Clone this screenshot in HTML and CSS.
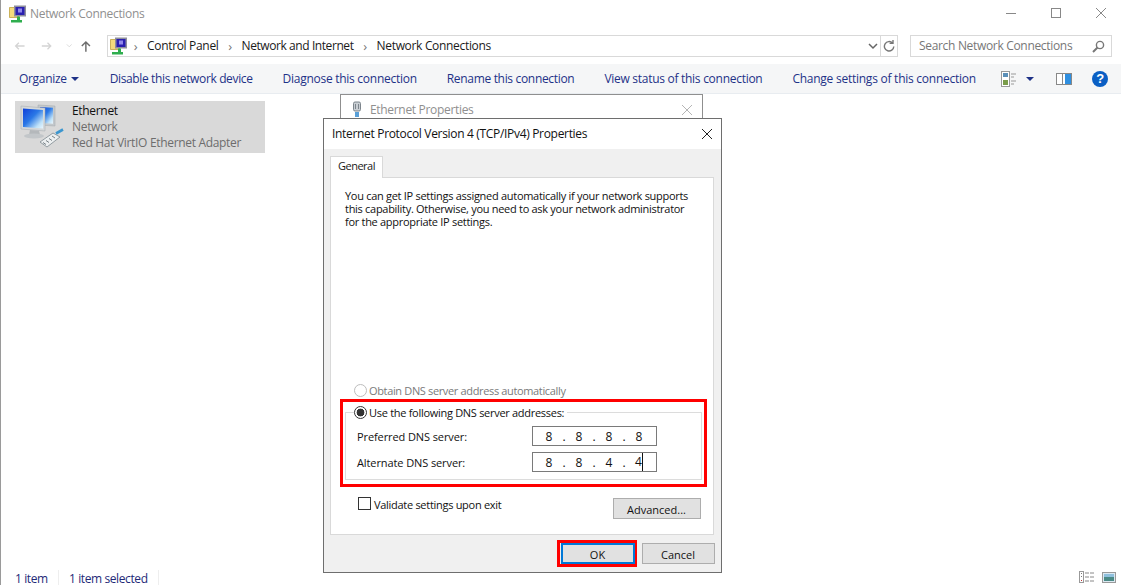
FILE: index.html
```html
<!DOCTYPE html>
<html lang="en">
<head>
<meta charset="utf-8">
<title>Network Connections</title>
<link rel="stylesheet" href="styles.css">
</head>
<body>
<svg class="defs" width="0" height="0" aria-hidden="true">
  <defs>
    <linearGradient id="scr" x1="0" y1="0" x2="1" y2="1">
      <stop offset="0" stop-color="#0f3fd8"/><stop offset=".45" stop-color="#2a78e6"/><stop offset=".8" stop-color="#bfe2f8"/><stop offset="1" stop-color="#eaf6fd"/>
    </linearGradient>
    <symbol id="netfolder" viewBox="0 0 18 18">
      <path d="M.5 2.5h5l1 1h3v9H.5z" fill="#f4db7c" stroke="#b8982f" stroke-width=".7"/>
      <rect x="5" y=".5" width="12" height="11" fill="#8f8f9c"/>
      <rect x="6.5" y="2" width="9" height="8" fill="#2a1fb0"/>
      <rect x="9" y="3.5" width="4" height="4" fill="#9289ea"/>
      <rect x="8" y="11.5" width="3" height="3.5" fill="#2fae4e"/>
      <rect x="2" y="15" width="11" height="2.5" fill="#2fae4e"/>
    </symbol>
  </defs>
</svg>
<div class="explorer">
  <header class="titlebar">
    <svg class="ico18"><use href="#netfolder"/></svg>
    <span class="title-text">Network Connections</span>
    <div class="winctl">
      <svg width="12" height="12" viewBox="0 0 12 12"><path d="M1 6.5h10" stroke="#888" fill="none"/></svg>
      <svg width="12" height="12" viewBox="0 0 12 12"><rect x="1.5" y="1.5" width="9" height="9" stroke="#888" fill="none"/></svg>
      <svg width="12" height="12" viewBox="0 0 12 12"><path d="M1 1l10 10M11 1L1 11" stroke="#888" fill="none"/></svg>
    </div>
  </header>
  <nav class="navbar">
    <div class="navbtns">
      <svg width="14" height="12" viewBox="0 0 14 12"><path d="M13 6H2M6 2L2 6l4 4" stroke="#d4d4d4" stroke-width="1.6" fill="none"/></svg>
      <svg width="14" height="12" viewBox="0 0 14 12"><path d="M1 6h11M8 2l4 4-4 4" stroke="#d4d4d4" stroke-width="1.6" fill="none"/></svg>
      <svg class="nb-down" width="8" height="6" viewBox="0 0 8 6"><path d="M1 1l3 3 3-3" stroke="#d4d4d4" fill="none"/></svg>
      <svg class="nb-up" width="12" height="14" viewBox="0 0 12 14"><path d="M6 14V2M1 7l5-5 5 5" stroke="#6d6d6d" stroke-width="1.8" fill="none"/></svg>
    </div>
    <div class="address">
      <svg class="ico18"><use href="#netfolder"/></svg>
      <span class="crumb-sep">›</span><span class="crumb">Control Panel</span>
      <span class="crumb-sep">›</span><span class="crumb crumb-mid">Network and Internet</span>
      <span class="crumb-sep">›</span><span class="crumb">Network Connections</span>
      <span class="addr-fill"></span>
      <svg class="addr-chev" width="10" height="7" viewBox="0 0 10 7"><path d="M1 1l4 4 4-4" stroke="#666" stroke-width="1.5" fill="none"/></svg>
      <span class="addr-refresh"><svg width="12" height="12" viewBox="0 0 12 12"><path d="M9.5 3A4.7 4.7 0 1 0 10.8 6.5M10 0v3.4H6.6" stroke="#777" stroke-width="1.4" fill="none"/></svg></span>
    </div>
    <div class="search">
      <span class="search-text">Search Network Connections</span>
      <svg width="13" height="13" viewBox="0 0 13 13"><circle cx="8" cy="5" r="3.6" stroke="#777" stroke-width="1.4" fill="none"/><path d="M5.5 7.5L1 12" stroke="#777" stroke-width="2"/></svg>
    </div>
  </nav>
  <div class="toolbar">
    <span class="tool tool-org">Organize<i class="caret"></i></span>
    <span class="tool tool-disable">Disable this network device</span>
    <span class="tool tool-diagnose">Diagnose this connection</span>
    <span class="tool">Rename this connection</span>
    <span class="tool tool-view">View status of this connection</span>
    <span class="tool tool-change">Change settings of this connection</span>
    <div class="tool-icons">
      <svg width="16" height="16" viewBox="0 0 16 16"><rect x=".5" y=".5" width="8" height="15" fill="#fff" stroke="#999"/><rect x="2" y="2" width="5" height="4" fill="#5b8fb8"/><rect x="2" y="9" width="5" height="5" fill="#7a9c4a"/><path d="M10 3h5M10 6h3M10 10h5M10 13h3" stroke="#999"/></svg>
      <i class="caret caret-views"></i>
      <svg class="pane-ico" width="16" height="12" viewBox="0 0 16 12"><rect x=".5" y=".5" width="15" height="11" fill="#fff" stroke="#888"/><rect x="6" y="1" width="1" height="10" fill="#888"/><rect x="9" y="1" width="6" height="10" fill="#2f8fe0"/></svg>
      <svg class="help-ico" width="16" height="16" viewBox="0 0 16 16"><circle cx="8" cy="8" r="8" fill="#0a5fc4"/><text x="8" y="12.2" class="help-q" text-anchor="middle">?</text></svg>
    </div>
  </div>
  <main class="content">
    <div class="adapter">
      <svg class="adapter-ico" width="48" height="48" viewBox="0 0 48 48">
        <path d="M19 1l17 1v20l-17-1z" fill="#c3c8cc" stroke="#a3a9ad" stroke-width=".5"/><path d="M21 3l13 .7v16l-13-.7z" fill="url(#scr)"/>
        <path d="M2 2l24 2v23L2 25z" fill="#d4d8da" stroke="#a3a9ad" stroke-width=".5"/><path d="M4 4.5l20 1.6v18.5L4 23z" fill="url(#scr)"/>
        <path d="M11 26l9 .7 1 4H10z" fill="#b4b8bb"/><ellipse cx="15" cy="32" rx="10" ry="2.4" fill="#c2c6c9"/>
        <path d="M21 38l13-9 7 4-13 10z" fill="#eceff0" stroke="#7f8a90" stroke-width=".8"/><path d="M24 38.500l3 2M27 36.500l3 2M30 34.500l3 2M33 32l3 2" stroke="#5c666c" stroke-width=".8"/>
        <path d="M37 29.500l7-4" stroke="#3b96cf" stroke-width="2.6"/>
      </svg>
      <div class="adapter-text">
        <div class="adapter-name">Ethernet</div>
        <div class="adapter-sub">Network</div>
        <div class="adapter-sub">Red Hat VirtIO Ethernet Adapter</div>
      </div>
    </div>
  </main>
  <footer class="statusbar">
    <span class="status-a">1 item</span>
    <span class="status-b">1 item selected</span>
    <span class="status-c"></span>
    <div class="status-views">
      <svg width="16" height="12" viewBox="0 0 16 12"><rect x=".5" y=".5" width="4" height="11" fill="#fff" stroke="#999"/><rect x="2" y="2" width="1" height="1" fill="#777"/><rect x="2" y="5" width="1" height="1" fill="#777"/><rect x="2" y="9" width="1" height="1" fill="#b33"/><path d="M6 2h4M11 2h4M6 6h4M11 6h4M6 10h4M11 10h4" stroke="#888"/></svg>
      <svg width="14" height="11" viewBox="0 0 14 11"><rect x=".5" y=".5" width="13" height="10" fill="#dce9f2" stroke="#999"/><rect x="2" y="2" width="10" height="3" fill="#8fc0dd"/><rect x="2" y="5" width="10" height="4" fill="#4a8a86"/></svg>
    </div>
  </footer>
</div>

<section class="dlg-back">
  <svg width="10" height="17" viewBox="0 0 10 17"><rect x="1.5" y="1" width="7" height="9" rx="1.5" fill="#c9ced3" stroke="#7d858c"/><path d="M3.5 3v5M6.5 3v5" stroke="#7d858c"/><rect x="3" y="11" width="4" height="5" fill="#5aa0d8"/></svg>
  <span class="back-title">Ethernet Properties</span>
  <svg class="back-x" width="12" height="12" viewBox="0 0 12 12"><path d="M1 1l10 10M11 1L1 11" stroke="#b5b5b5" fill="none"/></svg>
</section>

<section class="dlg">
  <div class="dlg-title">
    <span class="dlg-title-text">Internet Protocol Version 4 (TCP/IPv4) Properties</span>
    <svg width="12" height="12" viewBox="0 0 12 12"><path d="M1 1l10 10M11 1L1 11" stroke="#222" fill="none"/></svg>
  </div>
  <div class="dlg-body">
    <div class="tab">General</div>
    <div class="panel">
      <p class="intro">You can get IP settings assigned automatically if your network supports<br>this capability. Otherwise, you need to ask your network administrator<br>for the appropriate IP settings.</p>
      <div class="spacer"></div>
      <label class="radio-line radio-off"><i class="radio"></i>Obtain DNS server address automatically</label>
      <div class="dns-outline">
        <div class="group">
          <label class="radio-line legend"><i class="radio radio-on"></i>Use the following DNS server addresses:</label>
          <div class="dns-row"><span>Preferred DNS server:</span><div class="ip"><b>8</b><em>.</em><b>8</b><em>.</em><b>8</b><em>.</em><b>8</b></div></div>
          <div class="dns-row"><span>Alternate DNS server:</span><div class="ip"><b>8</b><em>.</em><b>8</b><em>.</em><b>4</b><em>.</em><b class="caretted">4</b></div></div>
        </div>
      </div>
      <div class="validate">
        <label class="check-line"><i class="check"></i>Validate settings upon exit</label>
        <span class="btn btn-adv">Advanced...</span>
      </div>
    </div>
    <div class="dlg-actions">
      <div class="ok-outline"><span class="btn btn-ok">OK</span></div>
      <span class="btn btn-cancel">Cancel</span>
    </div>
  </div>
</section>
</body>
</html>
```

FILE: styles.css
```css
* { box-sizing: border-box; }
html, body { margin: 0; height: 100%; overflow: hidden; }
body { background: #fff; font-family: "Open Sans", "Noto Sans", "Liberation Sans", sans-serif; font-size: 12px; letter-spacing: -0.32px; color: #1a1a1a; position: relative; }
.defs { position: absolute; }
.ico18 { width: 18px; height: 18px; flex: none; }

.explorer { height: 585px; border-left: 1px solid #9a9a9a; display: flex; flex-direction: column; }

.titlebar { height: 28px; display: flex; align-items: center; padding-left: 8px; flex: none; }
.title-text { margin: -2px 0 0 3px; color: #8f8f8f; }
.winctl { margin-left: auto; display: flex; gap: 33px; padding-right: 14px; margin-top: -2px; }

.navbar { height: 36px; display: flex; align-items: center; flex: none; padding: 0 9px 0 0; }
.navbtns { width: 106px; display: flex; align-items: center; padding-left: 13px; }
.navbtns svg { margin-right: 16px; }
.navbtns .nb-down { margin-right: 9px; margin-left: -3px; }
.address { width: 791px; height: 22px; border: 1px solid #d9d9d9; display: flex; align-items: center; padding-left: 2px; }
.address .ico18 { margin-right: -4px; }
.crumb-sep { width: 23px; text-align: center; color: #777; font-size: 13px; line-height: 1; }
.crumb { color: #1a1a1a; white-space: nowrap; margin-top: -2px; }
.crumb-mid { letter-spacing: -0.42px; }
.addr-fill { flex: 1; }
.addr-chev { margin-right: 2px; }
.addr-refresh { width: 17px; height: 20px; border-left: 1px solid #d9d9d9; display: flex; align-items: center; justify-content: center; }
.search { margin-left: 12px; width: 202px; height: 22px; border: 1px solid #d9d9d9; display: flex; align-items: center; justify-content: space-between; padding: 0 6px 0 8px; color: #777; white-space: nowrap; }
.search-text { margin-top: -2px; }

.toolbar { height: 30px; flex: none; background: #f5f6f7; border-bottom: 1px solid #e8ecf0; display: flex; align-items: center; padding: 0 0 0 18px; gap: 30px; color: #1e3287; white-space: nowrap; }
.tool-org { display: inline-flex; align-items: center; margin-right: 1px; }
.tool-disable { letter-spacing: -0.36px; }
.tool-diagnose { letter-spacing: -0.27px; }
.tool-view { letter-spacing: -0.28px; }
.tool-change { letter-spacing: -0.25px; }
.caret { display: inline-block; margin-left: 4px; border: 4px solid transparent; border-top: 4px solid #1e3287; border-bottom: 0; width: 8px; height: 4px; }
.tool-icons { margin-left: -5px; display: flex; align-items: center; }
.caret-views { margin-left: 9px; }
.pane-ico { margin-left: 22px; }
.help-ico { margin-left: 20px; }
.help-q { font-family: "Liberation Sans", sans-serif; font-size: 13px; font-weight: 700; fill: #fff; }

.content { flex: 1; padding: 7px 14px; }
.adapter { width: 250px; height: 52px; background: #d9d9d9; display: flex; align-items: flex-start; padding: 2px 0 0 4px; }
.adapter-ico { flex: none; margin-top: 1px; }
.adapter-text { margin-left: 5px; line-height: 16px; white-space: nowrap; }
.adapter-name { color: #111; }
.adapter-sub { color: #6d6d6d; }

.statusbar { height: 23px; flex: none; display: flex; align-items: center; color: #1e2a78; padding: 9px 0 0 14px; letter-spacing: -0.4px; }
.status-a { width: 44px; border-right: 1px solid #eee; }
.status-b { width: 100px; padding-left: 10px; border-right: 1px solid #eee; white-space: nowrap; }
.status-c { flex: 1; }
.status-views { display: flex; gap: 7px; padding-right: 5px; align-items: center; margin-top: -2px; }

.dlg-back { position: absolute; left: 340px; top: 94px; width: 363px; height: 60px; background: #fff; border: 1px solid #8f8f8f; display: flex; align-items: flex-start; padding: 6px 0 0 11px; color: #8f8f8f; }
.back-title { margin-left: 8px; }
.back-x { margin-left: auto; margin-right: 9px; margin-top: 3px; }

.dlg { position: absolute; left: 323px; top: 118px; width: 399px; height: 455px; border: 1px solid #6e6e6e; background: #f0f0f0; display: flex; flex-direction: column; }
.dlg-title { height: 30px; flex: none; background: #fff; display: flex; align-items: center; justify-content: space-between; padding: 0 8px; color: #111; }
.dlg-title-text { margin-top: -2px; }
.dlg-body { flex: 1; display: flex; flex-direction: column; padding: 7px 8px 0 6px; position: relative; font-size: 11px; letter-spacing: -0.29px; }
.tab { width: 53px; height: 22px; background: #fff; border: 1px solid #d9d9d9; border-bottom: 0; display: flex; align-items: center; justify-content: center; position: relative; z-index: 1; margin-bottom: -1px; padding-bottom: 5px; letter-spacing: -0.5px; }
.panel { width: 384px; height: 358px; background: #fff; border: 1px solid #d9d9d9; display: flex; flex-direction: column; padding: 11px 0 15px 9px; }
.intro { margin: 0 0 0 5px; line-height: 13px; color: #111; white-space: nowrap; }
.spacer { flex: 1; }
.radio-line { display: flex; align-items: center; height: 14px; white-space: nowrap; }
.radio-off { color: #7a7a7a; margin-left: 14px; margin-bottom: 2px; letter-spacing: -0.35px; }
.radio { width: 13px; height: 13px; border-radius: 50%; border: 1px solid #bdbdbd; margin-right: 2px; background: #fff; flex: none; }
.radio-on { border-color: #333; background: radial-gradient(circle, #333 0 3.6px, #fff 4.2px); }
.dns-outline { border: 3px solid #f00; width: 367px; height: 88px; padding: 10px 2px 0 2px; }
.group { border: 1px solid #dcdcdc; height: 68px; position: relative; padding: 13px 0 0 11px; }
.legend { position: absolute; left: 8px; top: -8px; background: #fff; padding-right: 3px; color: #111; }
.dns-row { display: flex; align-items: center; height: 20px; margin-bottom: 6px; color: #111; letter-spacing: -0.1px; }
.dns-row span { width: 175px; white-space: nowrap; }
.ip { width: 125px; height: 20px; border: 1px solid #7a7a7a; display: flex; align-items: center; padding-left: 12px; font-size: 12px; letter-spacing: 0; color: #111; }
.ip b { font-weight: 400; width: 8px; text-align: center; }
.ip em { font-style: normal; width: 22px; text-align: center; }
.caretted { border-right: 1px solid #111; height: 18px; line-height: 18px; }
.validate { display: flex; align-items: flex-start; justify-content: space-between; padding: 10px 4px 0 18px; width: 365px; }
.check-line { display: flex; align-items: center; color: #111; height: 13px; padding-top: 1px; }
.check { width: 13px; height: 13px; border: 1px solid #333; background: #fff; margin-right: 3px; margin-top: -1px; }
.btn { display: flex; align-items: center; justify-content: center; background: #e1e1e1; border: 1px solid #adadad; letter-spacing: 0; color: #111; padding: 2px 1px 0 0; }
.btn-adv { width: 88px; height: 21px; margin-top: 1px; }
.dlg-actions { display: flex; justify-content: flex-end; align-items: center; padding-top: 5px; gap: 5px; margin-right: -2px; }
.ok-outline { border: 3px solid #f00; width: 80px; height: 27px; padding: 0 0 0 1px; }
.btn-ok { width: 74px; height: 21px; border: 2px solid #0078d7; }
.btn-cancel { width: 73px; height: 21px; }
```
